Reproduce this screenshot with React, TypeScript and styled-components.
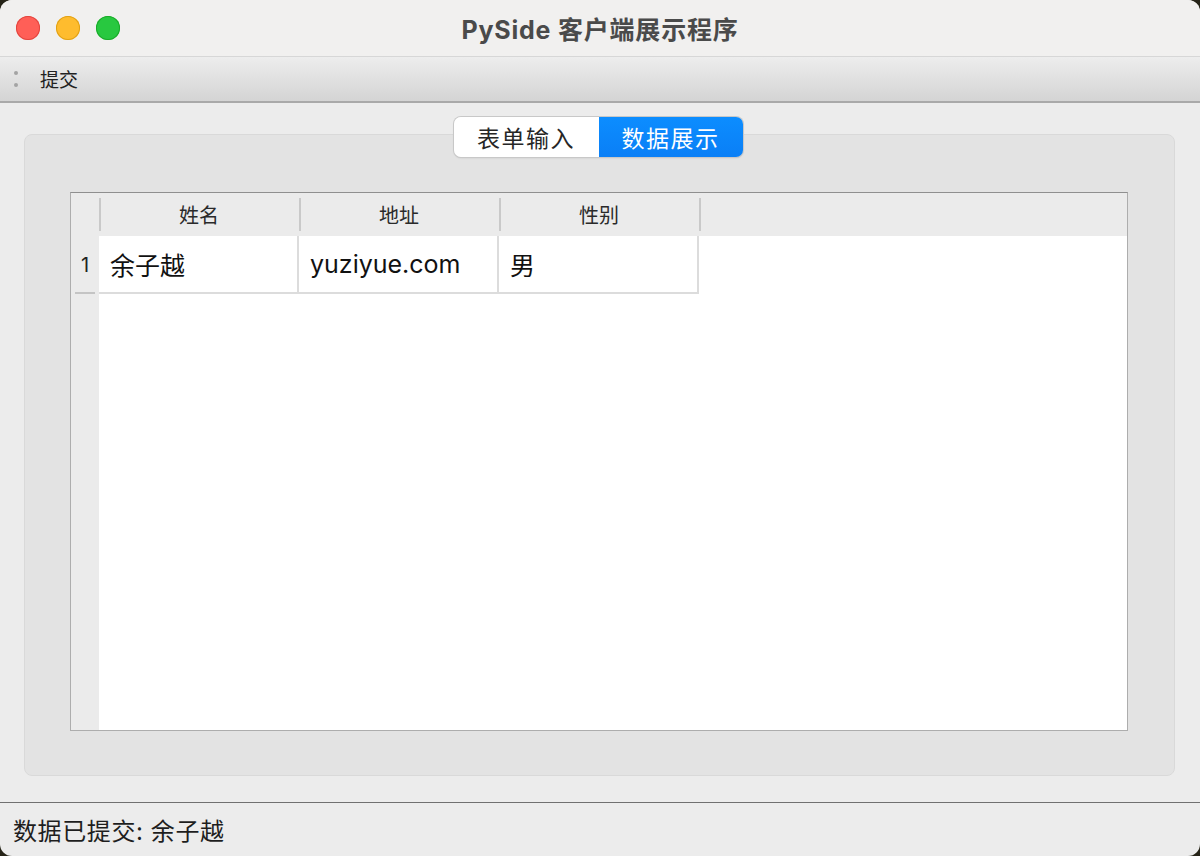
import React from "react";
import styled, { createGlobalStyle } from "styled-components";

const GlobalStyle = createGlobalStyle`
  html, body {
    margin: 0;
    padding: 0;
    background: #262418;
  }
  body {
    font-family: "Inter", "Noto Sans CJK SC", "Noto Sans", sans-serif;
    color: #1f1f1f;
  }
`;

const Window = styled.div`
  width: 1200px;
  height: 856px;
  border-radius: 12px;
  overflow: hidden;
  background: #ececec;
  display: flex;
  flex-direction: column;
`;

const TitleBar = styled.div`
  height: 56px;
  background: #f1f0ef;
  border-bottom: 1px solid #d7d7d7;
  display: flex;
  align-items: center;
  position: relative;
  flex-shrink: 0;
`;

const Lights = styled.div`
  display: flex;
  gap: 16px;
  padding-left: 16px;
`;

const Light = styled.span<{ $fill: string; $edge: string }>`
  width: 24px;
  height: 24px;
  border-radius: 50%;
  background: ${(p) => p.$fill};
  box-shadow: inset 0 0 0 1px ${(p) => p.$edge};
`;

const Title = styled.div`
  position: absolute;
  left: 0;
  right: 0;
  text-align: center;
  font-size: 25px;
  font-weight: 700;
  color: #4a4a4a;
  letter-spacing: 0.8px;
  pointer-events: none;
`;

const ToolBar = styled.div`
  height: 44px;
  background: linear-gradient(#ededed, #d4d4d4);
  border-bottom: 2px solid #a9a9a9;
  display: flex;
  align-items: center;
  flex-shrink: 0;
`;

const Handle = styled.div`
  width: 32px;
  display: flex;
  flex-direction: column;
  align-items: center;
  gap: 8px;
  padding-right: 8px;

  span {
    width: 4px;
    height: 4px;
    border-radius: 50%;
    background: #a3a3a3;
  }
`;

const ToolButton = styled.div`
  font-size: 19px;
  color: #222;
  margin-top: -1px;
`;

const Main = styled.div`
  flex: 1;
  display: flex;
  flex-direction: column;
  align-items: center;
  padding: 14px 25px 26px 24px;
`;

const Segmented = styled.div`
  display: flex;
  height: 40px;
  margin-left: -3px;
  border-radius: 7px;
  box-shadow: 0 0 0 1px #c8c8c8, 0 1px 2px rgba(0, 0, 0, 0.15);
  overflow: hidden;
  position: relative;
  z-index: 1;
`;

const Segment = styled.div<{ $active?: boolean }>`
  width: ${(p) => (p.$active ? 144 : 145)}px;
  display: flex;
  align-items: center;
  justify-content: center;
  font-size: 23px;
  letter-spacing: 1.5px;
  background: ${(p) => (p.$active ? "linear-gradient(#0c8dff, #0a7ff6)" : "#ffffff")};
  color: ${(p) => (p.$active ? "#ffffff" : "#262626")};
`;

const Pane = styled.div`
  align-self: stretch;
  flex: 1;
  margin-top: -23px;
  background: #e3e3e3;
  border: 1px solid #d9d9d9;
  border-radius: 8px;
  padding: 57px 46px 44px 45px;
  display: flex;
`;

const Table = styled.div`
  flex: 1;
  border: 1px solid #adadad;
  border-top-color: #8f8f8f;
  background: #ffffff;
  display: grid;
  grid-template-columns: 28px 200px 200px 200px 1fr;
  grid-template-rows: 43px 58px 1fr;
`;

const Corner = styled.div`
  background: #ebebeb;
`;

const HeadCell = styled.div`
  background: #ebebeb;
  font-size: 20px;
  color: #2a2a2a;
  display: flex;
  align-items: center;
  justify-content: center;
  position: relative;

  &::before {
    content: "";
    position: absolute;
    left: 0;
    top: 5px;
    bottom: 5px;
    width: 2px;
    background: #c9c9c9;
  }
`;

const HeadFill = styled.div`
  background: #ebebeb;
  position: relative;

  &::before {
    content: "";
    position: absolute;
    left: 0;
    top: 5px;
    bottom: 5px;
    width: 2px;
    background: #c9c9c9;
  }
`;

const RowLabel = styled.div`
  background: #ebebeb;
  font-size: 20px;
  color: #222;
  display: flex;
  align-items: center;
  justify-content: center;
  position: relative;

  &::after {
    content: "";
    position: absolute;
    left: 4px;
    right: 4px;
    bottom: 0;
    height: 2px;
    background: #c4c4c4;
  }
`;

const Cell = styled.div`
  font-size: 25px;
  color: #111;
  display: flex;
  align-items: center;
  padding-left: 11px;
  border-right: 2px solid #dcdcdc;
  border-bottom: 2px solid #dcdcdc;
`;

const LabelFill = styled.div`
  background: #ebebeb;
`;

const Blank = styled.div<{ $span: number }>`
  grid-column: span ${(p) => p.$span};
`;

const StatusBar = styled.div`
  height: 53px;
  border-top: 1px solid #707070;
  display: flex;
  align-items: center;
  padding-left: 13px;
  font-size: 24px;
  letter-spacing: 0.6px;
  color: #1e1e1e;
  flex-shrink: 0;
`;

const columns = ["姓名", "地址", "性别"];
const rows = [["余子越", "yuziyue.com", "男"]];

export default function App() {
  return (
    <>
      <GlobalStyle />
      <Window>
        <TitleBar>
          <Lights>
            <Light $fill="#ff5f57" $edge="#e2463f" />
            <Light $fill="#febc2e" $edge="#e1a116" />
            <Light $fill="#28c840" $edge="#1aab29" />
          </Lights>
          <Title>PySide 客户端展示程序</Title>
        </TitleBar>
        <ToolBar>
          <Handle>
            <span />
            <span />
          </Handle>
          <ToolButton>提交</ToolButton>
        </ToolBar>
        <Main>
          <Segmented>
            <Segment>表单输入</Segment>
            <Segment $active>数据展示</Segment>
          </Segmented>
          <Pane>
            <Table>
              <Corner />
              {columns.map((c) => (
                <HeadCell key={c}>{c}</HeadCell>
              ))}
              <HeadFill />
              {rows.map((r, ri) => (
                <React.Fragment key={ri}>
                  <RowLabel>{ri + 1}</RowLabel>
                  {r.map((v, ci) => (
                    <Cell key={ci}>{v}</Cell>
                  ))}
                  <div />
                </React.Fragment>
              ))}
              <LabelFill />
              <Blank $span={4} />
            </Table>
          </Pane>
        </Main>
        <StatusBar>数据已提交: 余子越</StatusBar>
      </Window>
    </>
  );
}
